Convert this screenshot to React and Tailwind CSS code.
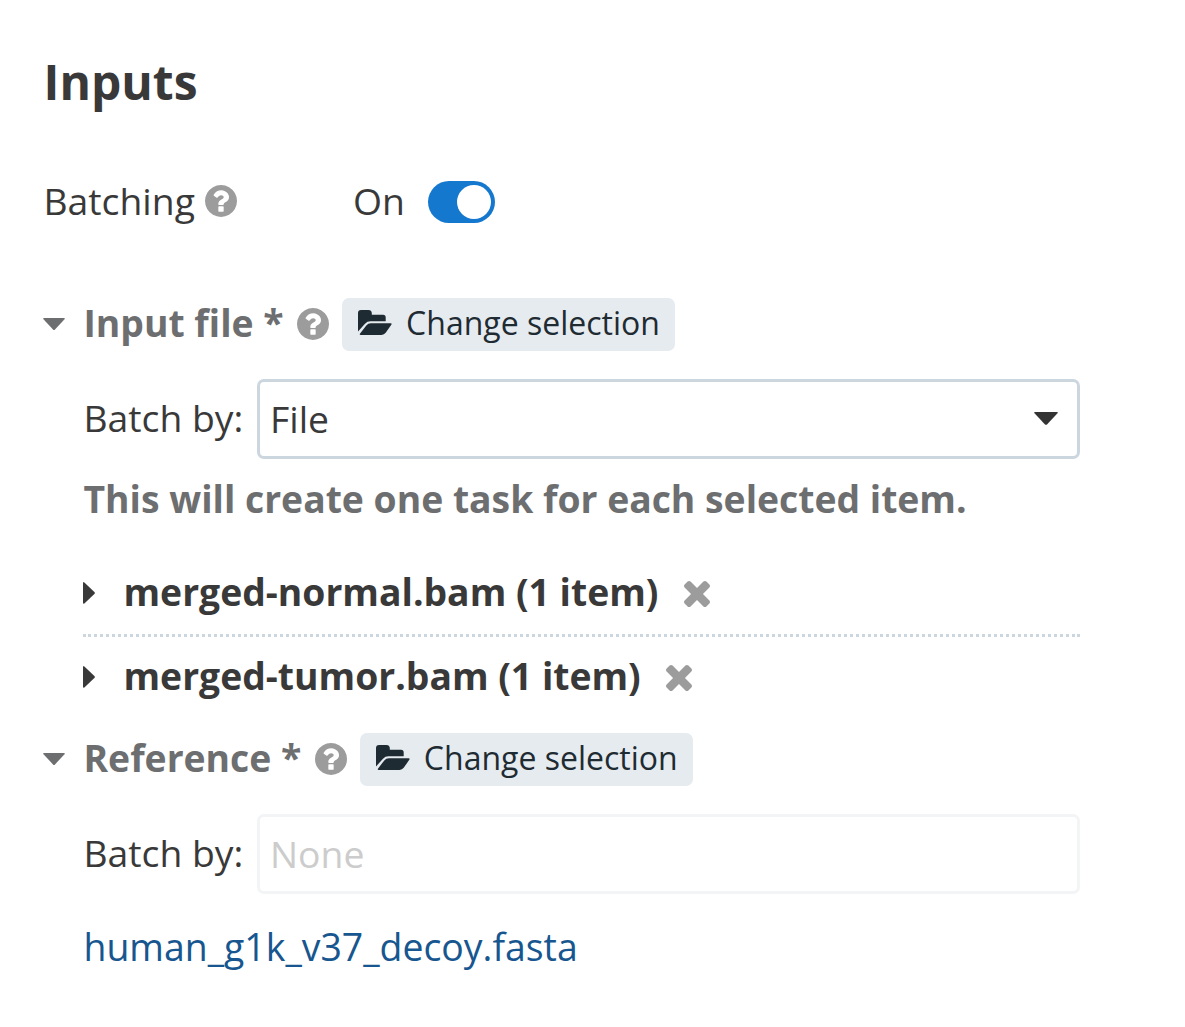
function Help() {
  return (
    <svg className="size-[32px] shrink-0 text-[#9c9c9c]" viewBox="128 128 1536 1536" fill="currentColor">
      <path d="M1024 1376v-192q0-14-9-23t-23-9h-192q-14 0-23 9t-9 23v192q0 14 9 23t23 9h192q14 0 23-9t9-23zm256-672q0-88-55.500-163t-138.500-116-170-41q-243 0-371 213-15 24 8 42l132 100q7 6 19 6 16 0 25-12 53-68 86-92 34-24 86-24 48 0 85.500 26t37.500 59q0 38-20 61t-68 45q-63 28-115.500 86.500t-52.500 125.500v36q0 14 9 23t23 9h192q14 0 23-9t9-23q0-19 21.500-49.500t54.500-49.500q32-18 49-28.500t46-35 44.500-48 28-60.500 12.500-81zm384 192q0 209-103 385.500t-279.500 279.500-385.500 103-385.500-103-279.500-279.500-103-385.500 103-385.500 279.500-279.500 385.500-103 385.500 103 279.500 279.500 103 385.500z" />
    </svg>
  );
}

function Folder() {
  return (
    <svg className="-mt-[3px] mr-[14px] h-[26px] w-[34px] shrink-0" viewBox="0 0 34 26" fill="#1f2b33">
      <path d="M0 21.500V3Q0 0 3 0H10.500Q13.500 0 13.800 3V4.800H25Q27.700 4.800 27.700 7.500V11.300H12.500Q9.200 11.300 7 13.700Z" />
      <path d="M13 13.200H32.500Q34.300 13.200 33.300 14.800L27.700 22.800Q26.200 24.900 23.500 24.900H2.800Q1 24.900 2.100 23.400L8.300 15.400Q10 13.200 13 13.200Z" />
    </svg>
  );
}

function Cross() {
  return (
    <svg className="mt-px ml-[25px] size-[26px] text-[#9c9c9c]" viewBox="302 366 1188 1188" fill="currentColor">
      <path d="M1490 1322q0 40-28 68l-136 136q-28 28-68 28t-68-28l-294-294-294 294q-28 28-68 28t-68-28l-136-136q-28-28-28-68t28-68l294-294-294-294q-28-28-28-68t28-68l136-136q28-28 68-28t68 28l294 294 294-294q28-28 68-28t68 28l136 136q28 28 28 68t-28 68l-294 294 294 294q28 28 28 68z" />
    </svg>
  );
}

function SectionHead({ title }) {
  return (
    <div className="flex h-[53px] items-center">
      <svg className="-mt-px mr-[18.500px] h-[12px] w-[22px] shrink-0" viewBox="0 0 22 12"><path d="M1 0H21Q22.500 .3 21.300 1.600L12 11.400Q11 12.400 10 11.400L.7 1.600Q-.5 .3 1 0Z" fill="#6d6e70" /></svg>
      <h2 className="-mt-[3px] text-[37.300px] font-bold whitespace-nowrap text-[#6d6e70]">{title}</h2>
      <span className="-mt-[2px] ml-[13.500px] flex"><Help /></span>
      <button className="ml-[13px] flex h-[53px] items-center rounded-[7px] bg-[#e6ebef] pr-[15.500px] pl-[16px] text-[32px] text-[#1f2b33]">
        <Folder />
        <span className="-mt-[3px] whitespace-nowrap">Change selection</span>
      </button>
    </div>
  );
}

function BatchBy({ value, disabled }) {
  return (
    <div className="ml-[40.500px] flex h-[80px] items-center">
      <span className="-mt-[2px] w-[173.500px] whitespace-nowrap">Batch by:</span>
      <div className={disabled ? "flex h-[80px] w-[823px] items-center justify-between rounded-[7px] border-[3px] border-[#f3f4f5] px-[10px] text-[#ccc]" : "flex h-[80px] w-[823px] items-center justify-between rounded-[7px] border-[3px] border-[#cbd6df] pl-[10px] pr-[19px]"}>
        <span>{value}</span>
        {!disabled && <svg className="-mt-px h-[13px] w-[24px]" viewBox="0 0 24 13"><path d="M1 0H23Q24.500 .3 23.300 1.600L13 12.400Q12 13.300 11 12.400L.7 1.600Q-.5 .3 1 0Z" fill="#333" /></svg>}
      </div>
    </div>
  );
}

function Item({ name }) {
  return (
    <div className="flex h-[81px] items-center">
      <svg className="-mt-[2px] mr-[28.500px] h-[22px] w-[12px]" viewBox="0 0 12 22"><path d="M0 .8Q.3-.5 1.600 .7L11.400 10Q12.400 11 11.400 12L1.600 21.300Q.3 22.500 0 21Z" fill="#393939" /></svg>
      <span className="-mt-[3px] font-bold whitespace-nowrap">{name} (1 item)</span>
      <Cross />
    </div>
  );
}

export default function App() {
  return (
    <main className="h-[1027px] w-[1185px] bg-white pt-[52px] pl-[43px] font-['Open_Sans',sans-serif] text-[37.300px] leading-[60px] text-[#393939]">
      <h1 className="ml-[0.500px] text-[48px] font-bold">Inputs</h1>
      <div className="mt-[60px] flex h-[60px] items-center">
        <span className="-mt-[2px] ml-[0.500px]">Batching</span>
        <span className="-mt-[2px] ml-[10.500px] flex"><Help /></span>
        <span className="-mt-[2px] ml-[115.500px]">On</span>
        <span className="ml-[23.500px] flex h-[42px] w-[67px] items-center justify-end rounded-full bg-[#1478cf] pr-[4px]"><span className="size-[34px] rounded-full bg-white" /></span>
      </div>
      <div className="mt-[66px]"><SectionHead title="Input file *" /></div>
      <div className="mt-[28px]"><BatchBy value="File" /></div>
      <p className="mt-[10px] ml-[40.500px] font-bold text-[#6d6e70]">This will create one task for each selected item.</p>
      <div className="mt-[24px] ml-[40px] w-[997px]">
        <Item name="merged-normal.bam" />
        <div className="border-t-[3px] border-dotted border-[#cbd6df]" />
        <Item name="merged-tumor.bam" />
      </div>
      <div className="mt-[15px]"><SectionHead title="Reference *" /></div>
      <div className="mt-[28px]"><BatchBy value="None" disabled /></div>
      <p className="mt-[23px] ml-[40.500px] text-[37.400px] text-[#17568f]">human_g1k_v37_decoy.fasta</p>
    </main>
  );
}
